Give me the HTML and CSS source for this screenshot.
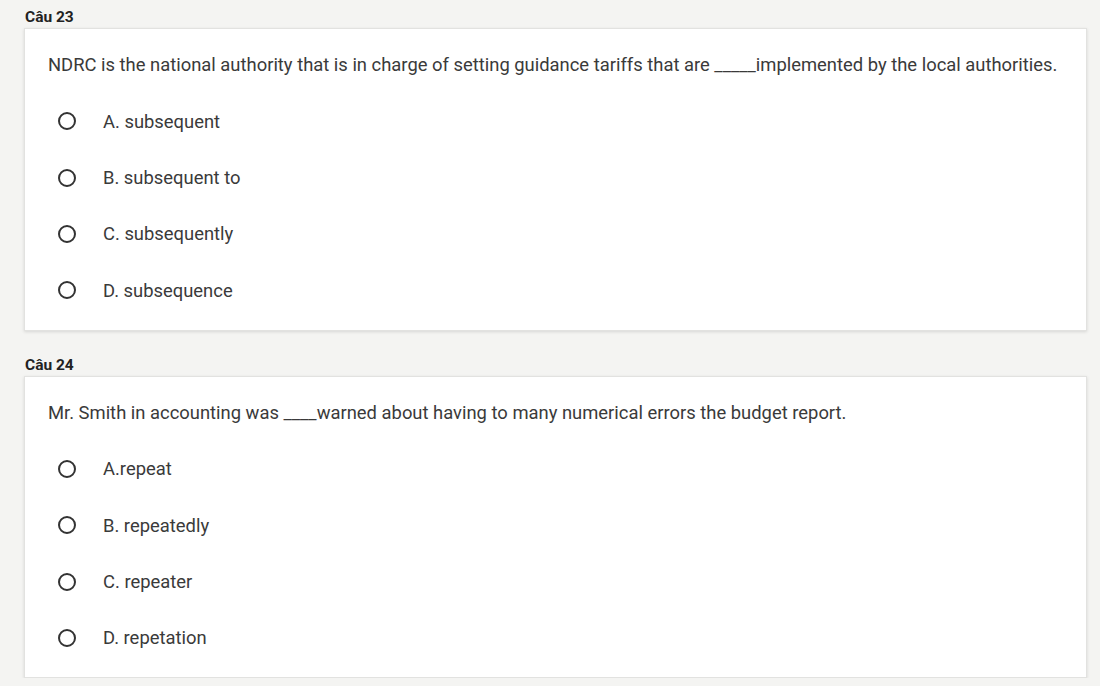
FILE: index.html
```html
<!DOCTYPE html>
<html>
<head>
<meta charset="utf-8">
<link rel="stylesheet" href="styles.css">
</head>
<body>
<div class="page">
  <section class="q">
    <div class="q-title">Câu 23</div>
    <div class="card">
      <div class="q-text">NDRC is the national authority that is in charge of setting guidance tariffs that are _____implemented by the local authorities.</div>
      <div class="opts">
        <label class="opt"><span class="radio"></span><span class="opt-text">A. subsequent</span></label>
        <label class="opt"><span class="radio"></span><span class="opt-text">B. subsequent to</span></label>
        <label class="opt"><span class="radio"></span><span class="opt-text">C. subsequently</span></label>
        <label class="opt"><span class="radio"></span><span class="opt-text">D. subsequence</span></label>
      </div>
    </div>
  </section>
  <section class="q">
    <div class="q-title">Câu 24</div>
    <div class="card">
      <div class="q-text">Mr. Smith in accounting was ____warned about having to many numerical errors the budget report.</div>
      <div class="opts">
        <label class="opt"><span class="radio"></span><span class="opt-text">A.repeat</span></label>
        <label class="opt"><span class="radio"></span><span class="opt-text">B. repeatedly</span></label>
        <label class="opt"><span class="radio"></span><span class="opt-text">C. repeater</span></label>
        <label class="opt"><span class="radio"></span><span class="opt-text">D. repetation</span></label>
      </div>
    </div>
  </section>
</div>
</body>
</html>
```
FILE: styles.css
```css
html, body {
  margin: 0;
  padding: 0;
  background: #f4f4f2;
  font-family: Roboto, "Liberation Sans", sans-serif;
}
.page {
  padding: 7px 13px 0 24px;
  display: flex;
  flex-direction: column;
  gap: 24px;
}
.q-title {
  font-size: 15.5px;
  font-weight: bold;
  color: #222;
  line-height: 20px;
  padding-left: 1px;
  margin-bottom: 1px;
}
.card {
  background: #fff;
  border: 1px solid #e2e2e0;
  box-shadow: 0 1px 3px rgba(0,0,0,0.12);
  padding: 24px 24px 11px 23px;
}
.q-text {
  font-size: 18.4px;
  line-height: 24px;
  color: #3a3a3a;
}
.opts {
  margin-top: 16px;
  display: flex;
  flex-direction: column;
}
.opt {
  height: 56.4px;
  display: flex;
  align-items: center;
}
.radio {
  width: 14px;
  height: 14px;
  border: 2px solid #333;
  border-radius: 50%;
  margin-left: 10px;
  margin-right: 27px;
  box-sizing: content-box;
}
.opt-text {
  font-size: 18.4px;
  color: #3a3a3a;
}
```
